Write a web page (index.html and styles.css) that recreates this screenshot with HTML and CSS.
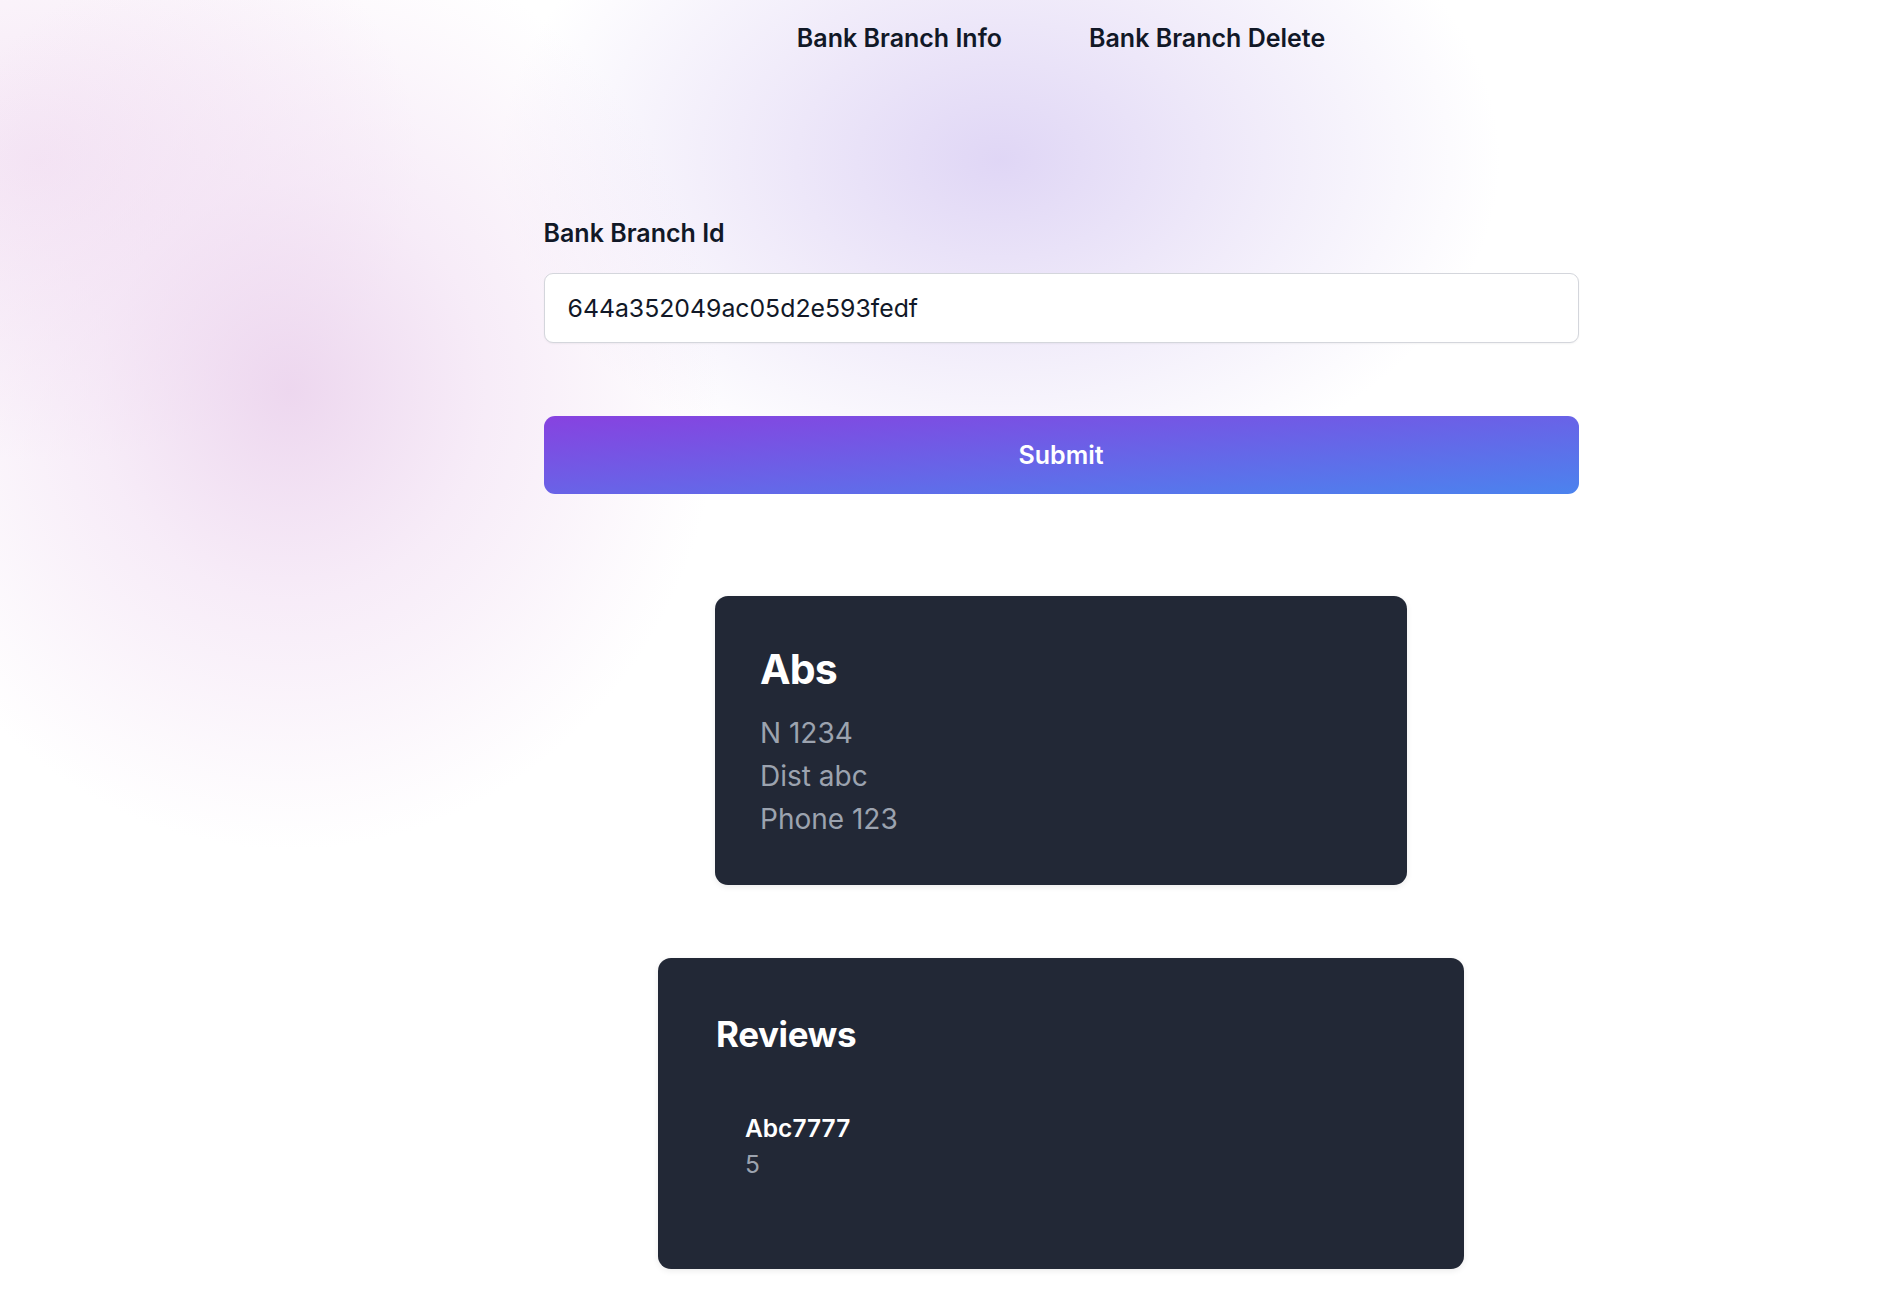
FILE: index.html
```html
<!DOCTYPE html>
<html lang="en">
<head>
<meta charset="utf-8">
<title>Bank Branch Info</title>
<link rel="stylesheet" href="styles.css">
</head>
<body>
<div class="page">
  <nav class="nav">
    <a class="nav-link" href="#">Bank Branch Info</a>
    <a class="nav-link" href="#">Bank Branch Delete</a>
  </nav>
  <main class="main">
    <form class="form">
      <label class="label" for="branch-id">Bank Branch Id</label>
      <input class="input" id="branch-id" type="text" value="644a352049ac05d2e593fedf">
      <button class="submit" type="button">Submit</button>
    </form>
    <section class="card info-card">
      <h1 class="info-title">Abs</h1>
      <p class="info-line">N 1234</p>
      <p class="info-line">Dist abc</p>
      <p class="info-line">Phone 123</p>
    </section>
    <section class="card reviews-card">
      <h2 class="reviews-title">Reviews</h2>
      <ul class="review-list">
        <li class="review">
          <p class="review-name">Abc7777</p>
          <p class="review-rating">5</p>
        </li>
      </ul>
    </section>
  </main>
</div>
</body>
</html>
```

FILE: styles.css
```css
html, body {
  margin: 0;
  padding: 0;
}

body {
  font-family: Inter, "Noto Sans", sans-serif;
  color: #111827;
  min-height: 1302px;
  background-color: #ffffff;
  background-image:
    radial-gradient(ellipse 430px 460px at 290px 390px, rgba(234, 208, 236, 0.85) 0%, rgba(240, 220, 242, 0.55) 45%, rgba(255, 255, 255, 0) 100%),
    radial-gradient(ellipse 500px 340px at 1000px 160px, rgba(222, 212, 245, 0.95) 0%, rgba(232, 224, 247, 0.65) 50%, rgba(255, 255, 255, 0) 100%),
    radial-gradient(ellipse 380px 300px at 40px 160px, rgba(240, 218, 240, 0.7) 0%, rgba(255, 255, 255, 0) 100%);
  background-repeat: no-repeat;
}

.page {
  padding-left: 222px;
}

.nav {
  display: flex;
  justify-content: center;
  gap: 87px;
  padding-top: 22px;
}

.nav-link {
  font-size: 25px;
  line-height: 32px;
  font-weight: 600;
  color: #111827;
  text-decoration: none;
}

.main {
  display: flex;
  flex-direction: column;
  align-items: center;
  padding-bottom: 34px;
}

.form {
  width: 1035px;
  margin-top: 163px;
  display: flex;
  flex-direction: column;
}

.label {
  font-size: 25px;
  line-height: 32px;
  font-weight: 600;
  color: #111827;
}

.input {
  margin-top: 24px;
  height: 70px;
  box-sizing: border-box;
  border: 1.5px solid #d4d6dc;
  border-radius: 9px;
  background: #ffffff;
  padding: 0 23px;
  font-family: Inter, "Noto Sans", sans-serif;
  font-size: 24.8px;
  color: #111827;
  box-shadow: 0 1px 2px rgba(0, 0, 0, 0.05);
  outline: none;
}

.submit {
  margin-top: 73px;
  height: 78px;
  border: none;
  border-radius: 11px;
  background: linear-gradient(to bottom right, #8742e0, #4b83ee);
  color: #ffffff;
  font-family: Inter, "Noto Sans", sans-serif;
  font-size: 25px;
  font-weight: 600;
  cursor: pointer;
}

.card {
  background: #222836;
  border-radius: 13px;
  box-sizing: border-box;
  color: #ffffff;
  box-shadow: 0 2px 6px rgba(0, 0, 0, 0.08);
}

.info-card {
  margin-top: 102px;
  width: 692px;
  padding: 48px 45px 44px 45px;
}

.info-title {
  margin: 0 0 18px;
  font-size: 41px;
  line-height: 50px;
  font-weight: 700;
  letter-spacing: -0.8px;
}

.info-line {
  margin: 0;
  font-size: 28px;
  line-height: 43px;
  color: #9ca3af;
}

.reviews-card {
  margin-top: 73px;
  width: 806px;
  padding: 54px 58px 87px 58px;
}

.reviews-title {
  margin: 0;
  font-size: 35px;
  line-height: 44px;
  font-weight: 700;
  letter-spacing: -0.4px;
}

.review-list {
  list-style: none;
  margin: 54px 0 0;
  padding: 0;
}

.review {
  padding-left: 29px;
}

.review-name {
  margin: 0;
  font-size: 24.5px;
  line-height: 36px;
  font-weight: 600;
}

.review-rating {
  margin: 0;
  font-size: 24.5px;
  line-height: 36px;
  color: #9ca3af;
}
```
